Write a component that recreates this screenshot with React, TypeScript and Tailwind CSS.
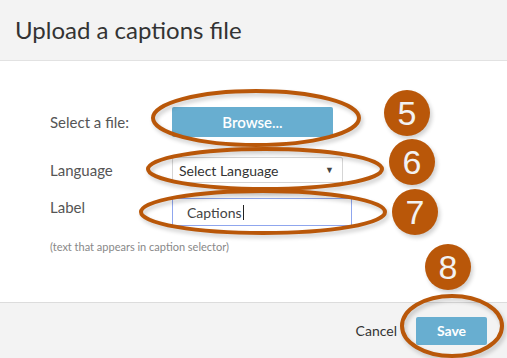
import React from "react";

const ORANGE = "#b95709";

function Badge({ n, cx, cy }: { n: string; cx: number; cy: number }) {
  return (
    <g>
      <circle cx={cx + 2} cy={cy + 3} r={23} fill="#000" opacity={0.18} filter="url(#blur)" />
      <circle cx={cx} cy={cy} r={23} fill={ORANGE} />
      <text
        x={cx}
        y={cy + 12}
        textAnchor="middle"
        fontSize={34}
        fontFamily="'Liberation Sans', Arial, sans-serif"
        fill="#f2f2f2"
      >
        {n}
      </text>
    </g>
  );
}

function Ring({ cx, cy, rx, ry }: { cx: number; cy: number; rx: number; ry: number }) {
  return (
    <g>
      <ellipse cx={cx + 2} cy={cy + 3} rx={rx} ry={ry} fill="none" stroke="#000" strokeWidth={4} opacity={0.2} filter="url(#blur)" />
      <ellipse cx={cx} cy={cy} rx={rx} ry={ry} fill="none" stroke={ORANGE} strokeWidth={4} />
    </g>
  );
}

export default function App() {
  return (
    <div className="relative w-[507px] h-[358px] overflow-hidden flex flex-col font-['Lato',sans-serif] bg-white">
      {/* Header */}
      <div className="h-[61px] shrink-0 bg-[#f3f3f3] border-b border-[#e2e2e2] flex items-center px-[15px]">
        <h1 className="text-[24px] text-[#333]">Upload a captions file</h1>
      </div>

      {/* Body */}
      <div className="flex-1 pl-[50px] pt-[46px]">
        <div className="flex items-center h-[30px]">
          <span className="w-[122px] text-[15px] text-[#555]">Select a file:</span>
          <button className="w-[161px] h-[30px] bg-[#68aed0] text-white text-[15px] font-semibold rounded-[2px]">Browse...</button>
        </div>
        <div className="flex items-center h-[26px] mt-[20px]">
          <span className="w-[122px] text-[15px] text-[#555]">Language</span>
          <div className="w-[171px] h-[26px] border border-[#d5d5d5] rounded-[2px] flex items-center justify-between pl-[6px] pr-[8px] text-[14px] text-[#333]">
            <span>Select Language</span>
            <span className="text-[9px] text-[#444]">▼</span>
          </div>
        </div>
        <div className="flex items-center h-[28px] mt-[15px]">
          <span className="w-[122px] text-[15px] text-[#555] -mt-[10px]">Label</span>
          <div className="w-[180px] h-[28px] border border-[#8fa6ee] flex items-center pl-[14px] text-[14px] text-[#444]">
            Captions<span className="w-px h-[15px] bg-[#222] ml-px" />
          </div>
        </div>
        <p className="mt-[13px] text-[11px] text-[#888]">(text that appears in caption selector)</p>
      </div>

      {/* Footer */}
      <div className="h-[56px] shrink-0 bg-[#f3f3f3] border-t border-[#dcdcdc] flex items-center justify-end pr-[20px] gap-[19px]">
        <span className="text-[14px] text-[#333]">Cancel</span>
        <button className="w-[71px] h-[28px] bg-[#68aed0] text-white text-[14px] font-bold rounded-[2px]">Save</button>
      </div>

      {/* Annotation overlay */}
      <svg className="absolute inset-0 pointer-events-none" width={507} height={358}>
        <defs>
          <filter id="blur" x="-20%" y="-20%" width="140%" height="140%">
            <feGaussianBlur stdDeviation="2" />
          </filter>
        </defs>
        <Ring cx={256} cy={118} rx={103} ry={27} />
        <Ring cx={265} cy={169} rx={117} ry={20} />
        <Ring cx={263} cy={212} rx={122} ry={21} />
        <Ring cx={452} cy={326} rx={50} ry={30} />
        <Badge n="5" cx={407} cy={113} />
        <Badge n="6" cx={412} cy={162} />
        <Badge n="7" cx={415} cy={212} />
        <Badge n="8" cx={448} cy={267} />
      </svg>
    </div>
  );
}
